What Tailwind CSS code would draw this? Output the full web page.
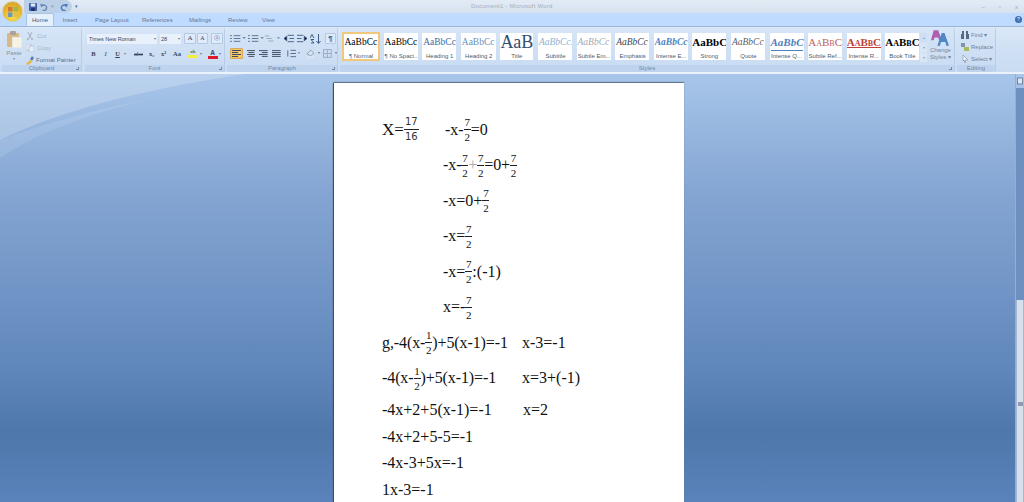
<!DOCTYPE html>
<html><head><meta charset="utf-8"><script src="https://cdn.jsdelivr.net/npm/@tailwindcss/browser@4"></script></head>
<body class="m-0 w-[1024px] h-[502px] overflow-hidden relative bg-[#7fa3cf] font-['Liberation_Sans',sans-serif]">
<!-- title bar -->
<div class="h-[13px] bg-gradient-to-b from-[#e3ebf5] to-[#d6e2f0] flex items-center relative">
  <div class="ml-[24px] w-[48px] h-[13px] rounded-r-full bg-[#bcd0e8] flex items-center gap-[3px] pl-[5px]">
    <svg width="8" height="8" viewBox="0 0 9 9"><rect width="9" height="9" rx="1" fill="#3c5fa8"/><rect x="2" y="0.5" width="5" height="3.5" fill="#dfe8f5"/><rect x="2.5" y="5.5" width="4" height="3.5" fill="#22336b"/></svg>
    <svg width="8" height="8" viewBox="0 0 9 9"><path d="M2 3.5A3 3 0 1 1 3 8" fill="none" stroke="#6d8bb5" stroke-width="1.6"/><path d="M0 1l4 .5L1.500 5z" fill="#6d8bb5"/></svg>
    <span class="text-[5px] leading-none text-[#8ba0bc]">▾</span>
    <svg class="ml-[3px]" width="8" height="8" viewBox="0 0 9 9"><path d="M7 3.500A3 3 0 1 0 6 8" fill="none" stroke="#4a78bb" stroke-width="1.600"/><path d="M9 1l-4 .5L7.500 5z" fill="#4a78bb"/></svg>
  </div>
  <span class="ml-[3px] text-[5px] leading-none text-[#4f6786]">▾</span>
  <span class="absolute left-[471px] top-[2px] text-[6px] leading-[9px] tracking-[0.2px] text-[#a4aebc] whitespace-nowrap">Document1 - Microsoft Word</span>
  <div class="ml-auto flex gap-[14px] pr-[6px] text-[6px] leading-none text-[#9aa7b8]"><span>–</span><span>▫</span><span>x</span></div>
</div>
<!-- office button -->
<div class="absolute left-[2px] top-[1px] w-[21px] h-[21px] rounded-full bg-[radial-gradient(circle_at_50%_75%,#f9e04f,#e5b52c_55%,#c89a34)] border border-[#d8cfa0] flex items-center justify-center z-10">
  <svg width="10" height="10" viewBox="0 0 11 11"><rect x="0" y="0" width="5" height="5" fill="#d4773a"/><rect x="6" y="0" width="5" height="5" fill="#9fb84a"/><rect x="0" y="6" width="5" height="5" fill="#6f98b8"/><rect x="6" y="6" width="5" height="5" fill="#e0c24a"/></svg>
</div>
<!-- tabs -->
<div class="h-[13px] bg-[#bfdbff] flex items-end pl-[26px] text-[6px] leading-[12px] text-[#62799a] relative whitespace-nowrap">
  <div class="w-[28px] h-[13px] bg-[#e6f0fc] border border-b-0 border-[#a9c3e2] rounded-t-[2px] text-center text-[#3f5878]">Home</div>
  <div class="ml-[8px] w-[16px] text-center">Insert</div>
  <div class="ml-[17px] w-[33px] text-center">Page Layout</div>
  <div class="ml-[14px] w-[30px] text-center">References</div>
  <div class="ml-[16px] w-[24px] text-center">Mailings</div>
  <div class="ml-[16px] w-[19px] text-center">Review</div>
  <div class="ml-[15px] w-[13px] text-center">View</div>
  <div class="absolute right-[2px] top-[3px] w-[7px] h-[7px] rounded-full bg-[#3f6fb5] text-white text-[5px] leading-[7px] text-center">?</div>
</div>
<!-- ribbon -->
<div class="h-[48px] border-t border-[#9cb6d6] border-b-2 border-b-[#eaf2fb] bg-gradient-to-b from-[#dbe8f8] via-[#cfe0f4] to-[#c9dcf2] flex gap-[2px] pl-[2px] pt-[1px] text-[#5b6f8b] text-[6px] leading-[8px]">
  <!-- clipboard -->
  <div class="w-[80px] h-[44px] rounded-[2px] bg-gradient-to-b from-[#d6e5f7] to-[#c8dbf2] border-r border-[#b6cde8] flex flex-col">
    <div class="h-[37px] flex">
      <div class="w-[24px] flex flex-col items-center pt-[3px]">
        <svg width="15" height="17" viewBox="0 0 15 17"><rect x="0" y="2" width="12" height="14" rx="1" fill="#d8b788"/><rect x="3" y="0" width="6" height="4" rx="1" fill="#a9a29a"/><rect x="5" y="6" width="10" height="11" fill="#f6f2e4" stroke="#c8cdd4" stroke-width=".5"/></svg>
        <span class="text-[#8392a6] mt-[1px] text-[6px]">Paste</span>
        <span class="text-[4px] leading-[4px] text-[#7d8da3]">▾</span>
      </div>
      <div class="flex flex-col pt-[3px] gap-[2px]">
        <div class="flex items-center gap-[3px] h-[10px] text-[#a8b4c4]"><svg width="8" height="8" viewBox="0 0 8 8"><path d="M2 0l3 6M6 0L3 6" stroke="#a2aebd" fill="none"/><circle cx="2" cy="7" r="1" fill="#a2aebd"/><circle cx="6" cy="7" r="1" fill="#a2aebd"/></svg>Cut</div>
        <div class="flex items-center gap-[3px] h-[10px] text-[#a8b4c4]"><svg width="8" height="8" viewBox="0 0 8 8"><rect x="0" y="0" width="5" height="6" fill="#e7eef7" stroke="#a8b7c9" stroke-width=".7"/><rect x="3" y="2" width="5" height="6" fill="#e7eef7" stroke="#a8b7c9" stroke-width=".7"/></svg>Copy</div>
        <div class="flex items-center gap-[2px] h-[10px] -ml-[1px] whitespace-nowrap text-[#5a6d88]"><svg width="9" height="9" viewBox="0 0 9 9"><path d="M1 8l4-4 2 2-4 3z" fill="#e6b93a"/><path d="M5 3l2-3 2 2-2 3z" fill="#5f7ea8"/></svg>Format Painter</div>
      </div>
    </div>
    <div class="h-[7px] bg-[#bdd3ee] text-center leading-[7px] text-[#7389a5] relative rounded-b-[2px]">Clipboard<span class="absolute right-[2px] top-[2px] w-[3px] h-[3px] border-b border-r border-[#7389a5]"></span></div>
  </div>
  <!-- font -->
  <div class="ml-[1px] w-[140px] h-[44px] rounded-[2px] bg-gradient-to-b from-[#d6e5f7] to-[#c8dbf2] border-r border-[#b6cde8] flex flex-col">
    <div class="h-[37px] pl-[2px] pt-[5px] flex flex-col gap-[4px]">
      <div class="flex items-center h-[11px] gap-[1px]">
        <div class="w-[70px] h-[10px] bg-[#e8f1fb] flex items-center pl-[2px] text-[5.500px] text-[#39475a] whitespace-nowrap">Times New Roman<span class="ml-auto pr-[1px] text-[4px] text-[#6a7c94]">▾</span></div>
        <div class="ml-[2px] w-[21px] h-[10px] bg-[#e8f1fb] flex items-center pl-[1px] text-[5.500px] text-[#39475a]">28<span class="ml-auto pr-[1px] text-[4px] text-[#6a7c94]">▾</span></div>
        <div class="ml-[2px] w-[12px] h-[11px] bg-[#dfeafa] border border-[#b3c8e2] rounded-[1px] text-center leading-[9px] text-[7px] font-['Liberation_Serif',serif] text-[#34465f]">A</div>
        <div class="w-[11px] h-[11px] bg-[#dfeafa] border border-[#b3c8e2] rounded-[1px] text-center leading-[9px] text-[6px] font-['Liberation_Serif',serif] text-[#34465f]">A</div>
        <div class="ml-[2px] w-[12px] h-[11px] bg-[#dfeafa] border border-[#b3c8e2] rounded-[1px] text-center leading-[9px] text-[#6c6fa8]">Ⓐ</div>
      </div>
      <div class="flex items-center h-[11px] gap-[1px] pl-[1px] text-[6.500px] text-[#36485f] font-['Liberation_Serif',serif]">
        <b class="w-[11px] text-center">B</b><i class="w-[11px] text-center">I</i><u class="w-[11px] text-center font-bold">U</u><span class="w-[7px] text-[4px] text-[#6a7c94]">▾</span><span class="w-[13px] text-center line-through">abc</span><b class="w-[11px] text-center">x₂</b><b class="w-[11px] text-center">x²</b><span class="w-[14px] text-center font-bold">Aa</span>
        <div class="ml-[2px] w-[12px] h-[10px] flex flex-col items-center"><span class="leading-[6px] text-[5px] font-bold text-[#5c6d3b]">ab</span><span class="w-[10px] h-[3px] bg-[#f5ec3d]"></span></div><span class="w-[6px] text-[4px] text-[#6a7c94]">▾</span>
        <div class="w-[11px] h-[10px] flex flex-col items-center"><span class="leading-[7px] font-bold font-['Liberation_Sans',sans-serif] text-[#2f4a75]">A</span><span class="w-[10px] h-[3px] bg-[#df1b2a]"></span></div><span class="text-[4px] text-[#6a7c94]">▾</span>
      </div>
    </div>
    <div class="h-[7px] bg-[#bdd3ee] text-center leading-[7px] text-[#7389a5] relative rounded-b-[2px]">Font<span class="absolute right-[2px] top-[2px] w-[3px] h-[3px] border-b border-r border-[#7389a5]"></span></div>
  </div>
  <!-- paragraph -->
  <div class="w-[111px] h-[44px] rounded-[2px] bg-gradient-to-b from-[#d6e5f7] to-[#c8dbf2] border-r border-[#b6cde8] flex flex-col">
    <div class="h-[37px] pl-[3px] pt-[5px] flex flex-col gap-[4px]">
      <div class="flex items-center h-[11px] gap-[1px] text-[#52667f]">
        <svg width="16" height="9" viewBox="0 0 17 9" stroke="#58708f"><path d="M0 1.500h2M4 1.500h7M0 4.500h2M4 4.500h7M0 7.500h2M4 7.500h7"/><path d="M13 3h4l-2 2z" fill="#7b8ca3" stroke="none"/></svg>
        <svg class="ml-[1px]" width="16" height="9" viewBox="0 0 17 9" stroke="#58708f"><path d="M0 1.500h2M4 1.500h7M0 4.500h2M4 4.500h7M0 7.500h2M4 7.500h7"/><path d="M13 3h4l-2 2z" fill="#7b8ca3" stroke="none"/></svg>
        <svg width="16" height="9" viewBox="0 0 19 9" stroke="#8da0b8"><path d="M0 1.500h5M2 4.500h6M4 7.500h6"/><path d="M14 3h4l-2 2z" fill="#7b8ca3" stroke="none"/></svg>
        <svg class="ml-[2px]" width="10" height="9" viewBox="0 0 11 9" stroke="#3f5c85"><path d="M4 1h7M6 4.500h5M4 8h7M3 2L0 4.500 3 7z"/></svg>
        <svg class="ml-[2px]" width="10" height="9" viewBox="0 0 11 9" stroke="#3f5c85"><path d="M0 1h7M0 4.500h5M0 8h7M8 2l3 2.500L8 7z"/></svg>
        <svg class="ml-[2px]" width="11" height="10" viewBox="0 0 11 10" stroke="#3f5c85"><path d="M8.500 0v9M6.500 7l2 2.500 2-2.500M0 4l2-3.500L4 4M1 9h3L1 5.500h3" fill="none"/></svg>
        <span class="ml-[3px] w-[11px] h-[11px] bg-[#dfeafa] border border-[#b3c8e2] rounded-[1px] text-center leading-[9px] text-[8px] font-bold text-[#4b607c]">¶</span>
      </div>
      <div class="flex items-center h-[11px] gap-[2px]">
        <div class="w-[13px] h-[11px] bg-[#f8c564] border border-[#d8a75a] rounded-[1px] flex items-center justify-center"><svg width="9" height="7" viewBox="0 0 9 7" stroke="#3c4c62"><path d="M0 .500h9M0 2.500h6M0 4.500h9M0 6.500h6"/></svg></div>
        <svg class="ml-[2px] mr-[1px]" width="9" height="7" viewBox="0 0 9 7" stroke="#3c4c62"><path d="M0 .500h9M1.500 2.500h6M0 4.500h9M1.500 6.500h6"/></svg>
        <svg class="mx-[1px]" width="9" height="7" viewBox="0 0 9 7" stroke="#3c4c62"><path d="M0 .500h9M3 2.500h6M0 4.500h9M3 6.500h6"/></svg>
        <svg class="mx-[1px]" width="9" height="7" viewBox="0 0 9 7" stroke="#3c4c62"><path d="M0 .500h9M0 2.500h9M0 4.500h9M0 6.500h9"/></svg>
        <svg class="ml-[2px]" width="15" height="9" viewBox="0 0 16 9" stroke="#4f6480"><path d="M5 1h6M5 4.500h6M5 8h6M2 1v7" fill="none"/><path d="M13 3h3l-1.500 2z" fill="#7b8ca3" stroke="none"/></svg>
        <svg class="ml-[4px]" width="15" height="9" viewBox="0 0 15 9"><path d="M1 5l4-4 3 3-3 3z" fill="#dbe4ef" stroke="#6d819c" stroke-width=".7"/><rect x="1" y="7.500" width="8" height="1.500" fill="#dfe8f3"/><path d="M12 3h3l-1.500 2z" fill="#7b8ca3"/></svg>
        <svg width="15" height="9" viewBox="0 0 15 9" stroke="#99acc4" fill="none"><rect x=".5" y=".5" width="8" height="8"/><path d="M4.500 0v9M0 4.500h9"/><path d="M12 3h3l-1.500 2z" fill="#7b8ca3" stroke="none"/></svg>
      </div>
    </div>
    <div class="h-[7px] bg-[#bdd3ee] text-center leading-[7px] text-[#7389a5] relative rounded-b-[2px]">Paragraph<span class="absolute right-[2px] top-[2px] w-[3px] h-[3px] border-b border-r border-[#7389a5]"></span></div>
  </div>
  <!-- styles -->
  <div class="w-[615px] h-[44px] rounded-[2px] bg-gradient-to-b from-[#d6e5f7] to-[#c8dbf2] border-r border-[#b6cde8] flex flex-col">
    <div class="h-[37px] flex items-start pl-[2px] pt-[5px]">
      <div class="flex gap-[4.600px] text-[9.500px] leading-[19px] font-['Liberation_Serif',serif] whitespace-nowrap">
        <div class="w-[38px] h-[29px] -my-[1px] -mx-[0.5px] bg-white border-2 border-[#f0c77b] overflow-hidden pl-[1px]"><div class="text-black h-[18px] leading-[17px]">AaBbCc</div><div class="text-[6px] leading-[8px] font-['Liberation_Sans',sans-serif] text-[#4f5b6b] text-center">¶ Normal</div></div>
        <div class="w-[34px] h-[27px] bg-white overflow-hidden pl-[1px]"><div class="text-black h-[19px]">AaBbCc</div><div class="text-[6px] leading-[8px] font-['Liberation_Sans',sans-serif] text-[#4f5b6b] text-center">¶ No Spaci...</div></div>
        <div class="w-[34px] h-[27px] bg-white overflow-hidden pl-[1px]"><div class="text-[#3b6ca3] h-[19px]">AaBbCc</div><div class="text-[6px] leading-[8px] font-['Liberation_Sans',sans-serif] text-[#4f5b6b] text-center">Heading 1</div></div>
        <div class="w-[35px] h-[27px] bg-white overflow-hidden pl-[1px]"><div class="text-[#6c91bb] h-[19px]">AaBbCc</div><div class="text-[6px] leading-[8px] font-['Liberation_Sans',sans-serif] text-[#4f5b6b] text-center">Heading 2</div></div>
        <div class="w-[33px] h-[27px] bg-white overflow-hidden text-center"><div class="text-[#2f4f74] h-[19px] text-[18px] leading-[18px]">AaB</div><div class="text-[6px] leading-[8px] font-['Liberation_Sans',sans-serif] text-[#4f5b6b]">Title</div></div>
        <div class="w-[34px] h-[27px] bg-white overflow-hidden pl-[1px]"><div class="text-[#8fb0d2] h-[19px] italic">AaBbCc.</div><div class="text-[6px] leading-[8px] font-['Liberation_Sans',sans-serif] text-[#4f5b6b] text-center">Subtitle</div></div>
        <div class="w-[34px] h-[27px] bg-white overflow-hidden pl-[1px]"><div class="text-[#a4a9b0] h-[19px] italic">AaBbCc</div><div class="text-[6px] leading-[8px] font-['Liberation_Sans',sans-serif] text-[#4f5b6b] text-center">Subtle Em...</div></div>
        <div class="w-[34px] h-[27px] bg-white overflow-hidden pl-[1px]"><div class="text-[#3d4650] h-[19px] italic">AaBbCc</div><div class="text-[6px] leading-[8px] font-['Liberation_Sans',sans-serif] text-[#4f5b6b] text-center">Emphasis</div></div>
        <div class="w-[34px] h-[27px] bg-white overflow-hidden pl-[1px]"><div class="text-[#4f81bd] h-[19px] italic font-bold">AaBbCc</div><div class="text-[6px] leading-[8px] font-['Liberation_Sans',sans-serif] text-[#4f5b6b] text-center">Intense E...</div></div>
        <div class="w-[34px] h-[27px] bg-white overflow-hidden text-center"><div class="text-black h-[19px] text-[11px] font-bold">AaBbC</div><div class="text-[6px] leading-[8px] font-['Liberation_Sans',sans-serif] text-[#4f5b6b]">Strong</div></div>
        <div class="w-[34px] h-[27px] bg-white overflow-hidden pl-[1px]"><div class="text-[#5a6068] h-[19px] italic">AaBbCc</div><div class="text-[6px] leading-[8px] font-['Liberation_Sans',sans-serif] text-[#4f5b6b] text-center">Quote</div></div>
        <div class="w-[34px] h-[27px] bg-white overflow-hidden text-center"><div class="text-[#4f81bd] h-[18px] text-[11px] italic font-bold border-b border-[#4f81bd] mx-[1px]">AaBbC</div><div class="text-[6px] leading-[8px] mt-[1px] font-['Liberation_Sans',sans-serif] text-[#4f5b6b]">Intense Q...</div></div>
        <div class="w-[34px] h-[27px] bg-white overflow-hidden text-center"><div class="text-[#c0605a] h-[19px] text-[11px] [font-variant:small-caps]">AaBbC</div><div class="text-[6px] leading-[8px] font-['Liberation_Sans',sans-serif] text-[#4f5b6b]">Subtle Ref...</div></div>
        <div class="w-[34px] h-[27px] bg-white overflow-hidden text-center"><div class="text-[#c0403a] h-[19px] text-[11px] font-bold underline [font-variant:small-caps]">AaBbC</div><div class="text-[6px] leading-[8px] font-['Liberation_Sans',sans-serif] text-[#4f5b6b]">Intense R...</div></div>
        <div class="w-[34px] h-[27px] bg-white overflow-hidden text-center"><div class="text-black h-[19px] text-[11px] font-bold [font-variant:small-caps]">AaBbC</div><div class="text-[6px] leading-[8px] font-['Liberation_Sans',sans-serif] text-[#4f5b6b]">Book Title</div></div>
      </div>
      <div class="ml-[1px] w-[7px] h-[29px] flex flex-col gap-[1px] text-[4px] leading-[9px] text-center text-[#8fa3bb]"><span class="h-[9px] bg-[#cfdff3]">▴</span><span class="h-[9px] bg-[#d9e6f6]">▾</span><span class="h-[9px] bg-[#d9e6f6]">▾</span></div>
      <div class="w-[29px] flex flex-col items-center -mt-[3px]">
        <svg width="18" height="16" viewBox="0 0 20 17"><path d="M3 0L0 11h3l1-3h4l1 3h3L8 0z" fill="#b05fb0"/><path d="M12 3L7 17h3l1-4h5l1 4h3L15 3z" fill="#4f86c6"/></svg>
        <span class="text-[#73879f] leading-[7px] text-center mt-[1px]">Change<br>Styles ▾</span>
      </div>
    </div>
    <div class="h-[7px] bg-[#bdd3ee] text-center leading-[7px] text-[#7389a5] relative rounded-b-[2px] pl-[0px]">Styles<span class="absolute right-[2px] top-[2px] w-[3px] h-[3px] border-b border-r border-[#7389a5]"></span></div>
  </div>
  <!-- editing -->
  <div class="w-[39px] h-[44px] rounded-[2px] bg-gradient-to-b from-[#d6e5f7] to-[#c8dbf2] border-r border-[#b6cde8] flex flex-col">
    <div class="h-[37px] pl-[4px] pt-[2px] flex flex-col gap-[2px] whitespace-nowrap text-[#6f8299]">
      <div class="h-[10px] flex items-center gap-[2px]"><svg width="8" height="8" viewBox="0 0 8 8" fill="#566a84"><rect x="0" y="3" width="3" height="5"/><rect x="5" y="3" width="3" height="5"/><rect x="1" y="0" width="2" height="4"/><rect x="5" y="0" width="2" height="4"/></svg>Find ▾</div>
      <div class="h-[10px] flex items-center gap-[2px]"><svg width="8" height="8" viewBox="0 0 8 8"><rect x="0" y="0" width="4" height="4" fill="#7e93ad"/><rect x="3" y="4" width="5" height="4" fill="#a8b95f"/></svg>Replace</div>
      <div class="h-[10px] flex items-center gap-[2px]"><svg width="8" height="8" viewBox="0 0 8 8"><path d="M2 0l5 5H4l1 3-1 0-1-3-1 1z" fill="#f2f6fb" stroke="#7b8da5" stroke-width=".6"/></svg>Select ▾</div>
    </div>
    <div class="h-[7px] bg-[#bdd3ee] text-center leading-[7px] text-[#7389a5] rounded-b-[2px]">Editing</div>
  </div>
</div>
<!-- work area -->
<div class="relative h-[428px] bg-[linear-gradient(to_bottom,#a8c6ea_0%,#85a6d3_27%,#5f86ba_70%,#4e77ab_84%,#5a83bb_100%)] overflow-hidden">
  <svg class="absolute left-0 top-0" width="340" height="90" viewBox="0 0 340 90"><path d="M0 66C60 36 150 14 245 0H0Z" fill="#fff" fill-opacity=".22"/><path d="M0 84C40 58 90 38 160 23C100 34 50 48 0 66Z" fill="#fff" fill-opacity=".1"/></svg>
  <!-- page -->
  <div class="relative ml-[334px] mt-[9px] w-[350px] h-[440px] bg-white shadow-[-1px_0_1px_#3d4f68,0_-1px_1px_#6a7f9c] pl-[48px] pt-[29px] font-['Liberation_Serif',serif] text-[16px] leading-[20px] text-[#111] whitespace-nowrap">
    <div class="flex items-center h-[35px]">
      <span class="w-[63px] flex items-center text-[17px]">X=<span class="inline-flex flex-col items-center text-[10px] leading-[14px] font-['DejaVu_Sans',sans-serif] text-[#333]"><span class="border-b border-[#222] px-[1px]">17</span><span>16</span></span></span>
      <span class="flex items-center">-x-<span class="inline-flex flex-col items-center text-[11px] leading-[14px] w-[7px]"><span class="border-b border-[#222] w-full text-center">7</span><span>2</span></span>=0</span>
    </div>
    <div class="flex items-center h-[36px] ml-[61px] tracking-[-0.1px]">-x-<span class="inline-flex flex-col items-center text-[11px] leading-[14px] w-[7px]"><span class="border-b border-[#222] w-full text-center">7</span><span>2</span></span><span class="text-[#aaa]">+</span><span class="inline-flex flex-col items-center text-[11px] leading-[14px] w-[7px]"><span class="border-b border-[#222] w-full text-center">7</span><span>2</span></span>=0+<span class="inline-flex flex-col items-center text-[11px] leading-[14px] w-[7px]"><span class="border-b border-[#222] w-full text-center">7</span><span>2</span></span></div>
    <div class="flex items-center h-[35px] ml-[61px]">-x=0+<span class="inline-flex flex-col items-center text-[11px] leading-[14px] w-[7px]"><span class="border-b border-[#222] w-full text-center">7</span><span>2</span></span></div>
    <div class="flex items-center h-[36px] ml-[61px]">-x=<span class="inline-flex flex-col items-center text-[11px] leading-[14px] w-[7px]"><span class="border-b border-[#222] w-full text-center">7</span><span>2</span></span></div>
    <div class="flex items-center h-[35px] ml-[61px]">-x=<span class="inline-flex flex-col items-center text-[11px] leading-[14px] w-[7px]"><span class="border-b border-[#222] w-full text-center">7</span><span>2</span></span>:(-1)</div>
    <div class="flex items-center h-[36px] ml-[61px]">x=-<span class="inline-flex flex-col items-center text-[11px] leading-[14px] w-[7px]"><span class="border-b border-[#222] w-full text-center">7</span><span>2</span></span></div>
    <div class="flex items-center h-[35px]"><span class="w-[140px] flex items-center tracking-[-0.1px]"><span class="underline decoration-[#4a8a3a]">g</span>,-4(x-<span class="inline-flex flex-col items-center text-[11px] leading-[14px] w-[7px]"><span class="border-b border-[#222] w-full text-center">1</span><span>2</span></span>)+5(x-1)=-1</span><span>x-3=-1</span></div>
    <div class="flex items-center h-[36px]"><span class="w-[140px] flex items-center tracking-[-0.1px]">-4(x-<span class="inline-flex flex-col items-center text-[11px] leading-[14px] w-[7px]"><span class="border-b border-[#222] w-full text-center">1</span><span>2</span></span>)+5(x-1)=-1</span><span>x=3+(-1)</span></div>
    <div class="flex items-center h-[28px]"><span class="w-[141px]">-4x+2+5(x-1)=-1</span><span>x=2</span></div>
    <div class="flex items-center h-[25px]">-4x+2+5-5=-1</div>
    <div class="flex items-center h-[27px]">-4x-3+5x=-1</div>
    <div class="flex items-center h-[27px]">1x-3=-1</div>
  </div>
  <!-- scrollbar -->
  <div class="absolute right-0 top-0 bottom-0 w-[9px] flex flex-col border-l border-[#8fb0d8]">
    <div class="h-[14px] flex items-center justify-center"><svg width="6" height="8" viewBox="0 0 6 8"><rect x=".5" y="1" width="5" height="6" fill="#dce6f2" stroke="#4f6685" stroke-width=".7"/></svg></div>
    <div class="h-[212px] bg-[#6d90c0]"></div>
    <div class="flex-1 bg-[#d6dfec] border-x border-[#a5b7d0] relative"><div class="absolute left-[1px] top-[102px] w-[5px] h-[4px] bg-[#8c9bb0]"></div></div>
  </div>
</div>
</body></html>
